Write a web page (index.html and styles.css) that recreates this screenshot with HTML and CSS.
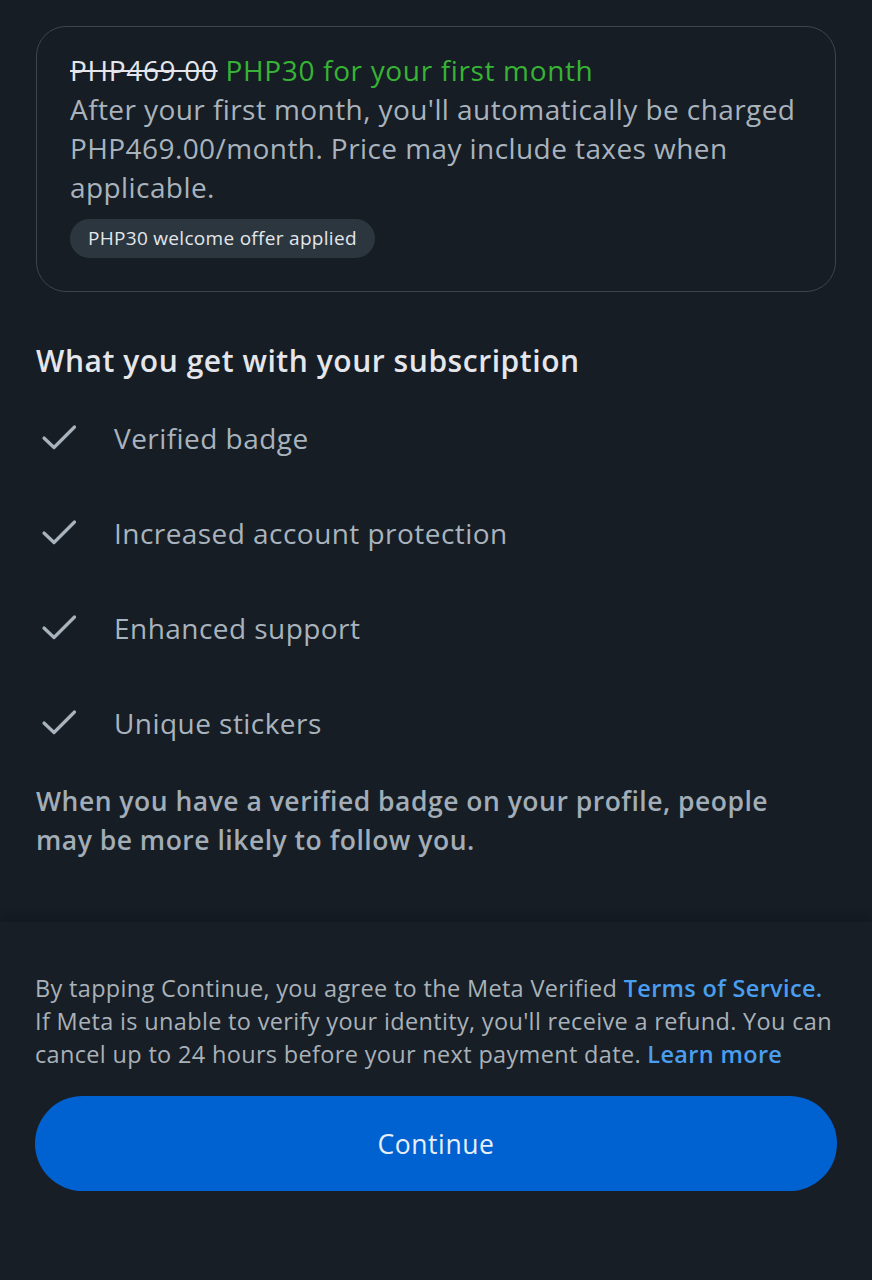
FILE: index.html
```html
<!DOCTYPE html>
<html lang="en">
<head>
<meta charset="utf-8">
<link rel="stylesheet" href="styles.css">
</head>
<body>
<div class="page">
  <main class="content">
    <section class="offer-card">
      <p class="offer-title"><span class="old-price">PHP469.00</span> <span class="new-price">PHP30 for your first month</span></p>
      <p class="offer-desc">After your first month, you'll automatically be charged PHP469.00/month. Price may include taxes when applicable.</p>
      <span class="offer-badge">PHP30 welcome offer applied</span>
    </section>

    <h2 class="section-title">What you get with your subscription</h2>
    <ul class="benefits">
      <li class="benefit"><svg class="check" viewBox="0 0 40 40"><path d="M4 20 L14 29.5 L34.5 9"/></svg><span>Verified badge</span></li>
      <li class="benefit"><svg class="check" viewBox="0 0 40 40"><path d="M4 20 L14 29.5 L34.5 9"/></svg><span>Increased account protection</span></li>
      <li class="benefit"><svg class="check" viewBox="0 0 40 40"><path d="M4 20 L14 29.5 L34.5 9"/></svg><span>Enhanced support</span></li>
      <li class="benefit"><svg class="check" viewBox="0 0 40 40"><path d="M4 20 L14 29.5 L34.5 9"/></svg><span>Unique stickers</span></li>
    </ul>
    <p class="note">When you have a verified badge on your profile, people may be more likely to follow you.</p>
  </main>

  <footer class="footer">
    <p class="legal">By tapping Continue, you agree to the Meta Verified <a class="link">Terms of Service.</a> If Meta is unable to verify your identity, you'll receive a refund. You can cancel up to 24 hours before your next payment date. <a class="link">Learn more</a></p>
    <button class="continue-btn">Continue</button>
  </footer>
</div>
</body>
</html>
```
FILE: styles.css
```css
* { box-sizing: border-box; }
html, body {
  margin: 0;
  padding: 0;
  background: #161d24;
}
body {
  font-family: "Open Sans", "Noto Sans", sans-serif;
  color: #a9b3bd;
  width: 872px;
  height: 1280px;
  overflow: hidden;
}
.page {
  display: flex;
  flex-direction: column;
  height: 1280px;
}
.content {
  padding: 26px 36px 0 36px;
  height: 922px;
}
.offer-card {
  border: 1.5px solid #3c4650;
  border-radius: 30px;
  padding: 24px 30px 32px 33px;
  height: 266px;
}
.offer-title {
  margin: 0;
  font-size: 28px;
  line-height: 39px;
  letter-spacing: 0.65px;
}
.old-price {
  color: #e4e6eb;
  text-decoration: line-through;
  text-decoration-thickness: 2px;
}
.new-price {
  color: #37b335;
}
.offer-desc {
  margin: 0;
  font-size: 28px;
  line-height: 39px;
  letter-spacing: 0.42px;
  color: #a9b3bd;
}
.offer-badge {
  display: inline-block;
  margin-top: 12px;
  background: #2b363f;
  color: #e4e6eb;
  font-size: 19px;
  letter-spacing: 0.3px;
  line-height: 39px;
  height: 39px;
  padding: 0 18px;
  border-radius: 20px;
}
.section-title {
  margin: 50px 0 0 0;
  font-size: 30px;
  line-height: 38px;
  letter-spacing: 0.55px;
  font-weight: 600;
  color: #e4e6eb;
}
.benefits {
  list-style: none;
  margin: 38px 0 0 0;
  padding: 0;
  display: flex;
  flex-direction: column;
  gap: 56px;
}
.benefit {
  display: flex;
  align-items: center;
  height: 39px;
  font-size: 28px;
  letter-spacing: 0.45px;
  color: #a9b3bd;
}
.check {
  width: 40px;
  height: 40px;
  margin-left: 4px;
  margin-right: 34px;
  fill: none;
  stroke: #a9b3bd;
  stroke-width: 3.2;
  stroke-linecap: round;
  stroke-linejoin: round;
}
.note {
  margin: 40px 0 0 0;
  max-width: 765px;
  font-size: 26.5px;
  line-height: 39px;
  letter-spacing: 0.5px;
  font-weight: 600;
  color: #a2adb7;
}
.footer {
  flex: 1;
  background: #171e25;
  box-shadow: 0 -6px 10px rgba(0, 0, 0, 0.15);
  padding: 50px 35px 0 35px;
}
.legal {
  margin: 0;
  font-size: 23.5px;
  line-height: 33px;
  letter-spacing: 0.33px;
  color: #a9b1b9;
}
.link {
  display: inline-block;
  vertical-align: top;
  line-height: 33px;
  color: #4a9ef0;
  font-weight: 600;
  text-decoration: none;
}
.continue-btn {
  display: block;
  width: 802px;
  height: 95px;
  margin-top: 25px;
  border: none;
  border-radius: 48px;
  background: #0062d1;
  color: #e8eef8;
  font-family: inherit;
  font-size: 26.5px;
  letter-spacing: 0.6px;
  font-weight: 500;
}
```
